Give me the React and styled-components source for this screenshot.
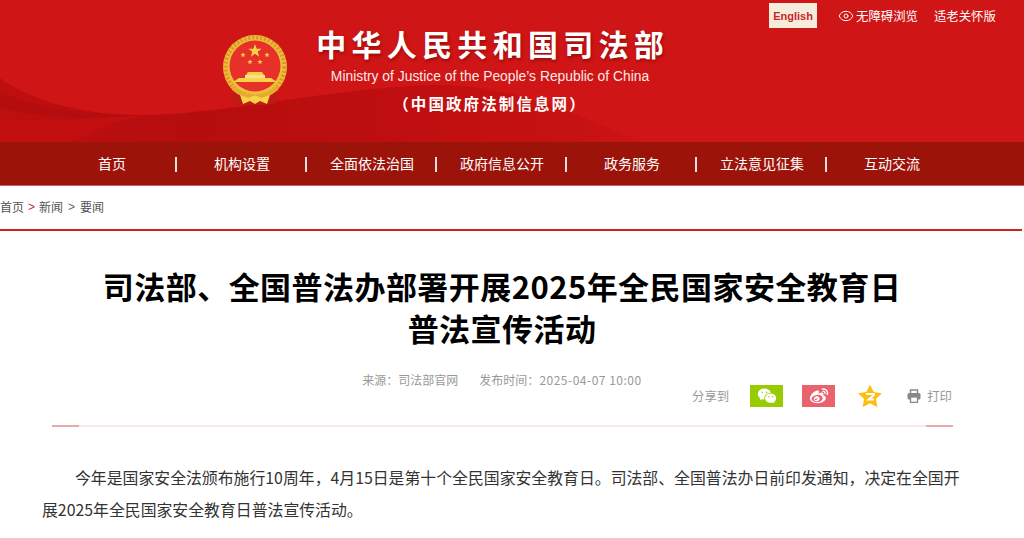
import React from "react";
import styled, { createGlobalStyle } from "styled-components";
import { Eye } from "lucide-react";
import { RiWechatFill, RiWeiboFill } from "react-icons/ri";

const CJK = `"Noto Sans CJK SC", "Liberation Sans", sans-serif`;

const GlobalStyle = createGlobalStyle`
  html, body {
    margin: 0;
    padding: 0;
    height: 100%;
    overflow: hidden;
    background: #fff;
    font-family: ${CJK};
  }
`;

const Header = styled.header`
  position: relative;
  height: 142px;
  background: #cf1515;
  overflow: hidden;
`;

const Waves = styled.svg`
  position: absolute;
  left: 0;
  top: 0;
`;

const Masthead = styled.div`
  position: relative;
  display: flex;
  align-items: flex-start;
  padding: 35px 0 0 222px;
`;

const Names = styled.div`
  display: flex;
  flex-direction: column;
  align-items: center;
  width: 346px;
  margin: -12px 0 0 29px;
  color: #fff;
`;

const SiteTitle = styled.div`
  font-size: 30px;
  font-weight: 700;
  line-height: 40px;
  letter-spacing: 5.3px;
  margin-right: -5.3px;
  white-space: nowrap;
  text-shadow: 1px 2px 3px rgba(90, 0, 0, 0.45);
`;

const SiteEnglish = styled.div`
  font-family: "Liberation Sans", sans-serif;
  font-size: 13.85px;
  line-height: 16px;
  margin-top: 5px;
  color: #fbe9e9;
  white-space: nowrap;
`;

const SiteNote = styled.div`
  font-size: 15.5px;
  font-weight: 700;
  line-height: 20px;
  letter-spacing: 2.1px;
  margin-top: 9px;
  white-space: nowrap;
`;

const TopLinks = styled.div`
  position: absolute;
  top: 3px;
  left: 769px;
  display: flex;
  align-items: center;
  height: 25px;
  color: #fff;
  font-size: 12.4px;
`;

const EnglishBadge = styled.a`
  display: flex;
  align-items: center;
  justify-content: center;
  width: 48px;
  height: 25px;
  background: #f6ecdc;
  color: #c9262a;
  font-family: "Liberation Sans", sans-serif;
  font-size: 11px;
  font-weight: 700;
`;

const TopLink = styled.a`
  display: flex;
  align-items: center;
  gap: 2px;
  margin-left: ${(p) => p.$gap}px;
  white-space: nowrap;
`;

const Nav = styled.nav`
  display: grid;
  grid-template-columns: repeat(7, 130px);
  height: 43px;
  padding-left: 47px;
  background: #9c130a;
  border-bottom: 1px solid #c4665f;
`;

const NavItem = styled.a`
  position: relative;
  display: flex;
  align-items: center;
  justify-content: center;
  padding-bottom: 2px;
  color: #fff;
  font-size: 14px;
  white-space: nowrap;

  &:not(:last-child)::after {
    content: "";
    position: absolute;
    right: 0;
    top: 15px;
    width: 2px;
    height: 15px;
    background: #f0dcdc;
  }
`;

const Crumbs = styled.div`
  display: flex;
  align-items: center;
  gap: 4px;
  height: 45px;
  padding-bottom: 2px;
  border-bottom: 2px solid #d0201f;
  color: #555;
  font-size: 12px;
  box-sizing: border-box;
  margin-right: 2px;
`;

const CrumbArrow = styled.span`
  margin: 0 ${(p) => (p.$red ? 0 : 1)}px;
  font-family: "Liberation Sans", sans-serif;
  color: ${(p) => (p.$red ? "#c0303a" : "#666")};
`;

const Article = styled.main`
  width: 900px;
  margin-left: 52px;
`;

const Headline = styled.h1`
  margin: 34px 0 0;
  font-size: 31px;
  font-weight: 700;
  line-height: 42px;
  letter-spacing: 0.45px;
  color: #000;
  text-align: center;
  white-space: nowrap;
`;

const Meta = styled.div`
  display: flex;
  justify-content: center;
  gap: 21px;
  height: 12px;
  margin-top: 24px;
  color: #999;
  font-size: 12px;
  line-height: 14px;
`;

const MetaDate = styled.span`
  letter-spacing: 0.5px;
`;

const ShareRow = styled.div`
  display: flex;
  justify-content: flex-end;
  align-items: center;
  height: 22px;
  color: #999;
  font-size: 12.4px;
`;

const ShareLabel = styled.span`
  margin-right: 21px;
`;

const ShareButton = styled.a`
  display: flex;
  align-items: center;
  justify-content: center;
  width: 33px;
  height: 22px;
  margin-right: ${(p) => p.$gap}px;
  background: ${(p) => p.$bg};
  color: #fff;
`;

const QzoneIcon = styled.svg`
  margin-right: 25px;
`;

const PrintLink = styled.a`
  display: flex;
  align-items: center;
  gap: 6px;
`;

const Rule = styled.div`
  position: relative;
  height: 2px;
  margin-top: 18px;
  background: #f5e9ea;

  &::before,
  &::after {
    content: "";
    position: absolute;
    top: 0;
    width: 27px;
    height: 2px;
    background: #e8a9a9;
  }
  &::before {
    left: 0;
  }
  &::after {
    right: -1px;
  }
`;

const Body = styled.p`
  width: 924px;
  margin: 35px 0 0 -10px;
  color: #333;
  font-size: 15.87px;
  line-height: 32px;
  text-indent: 33px;
`;

function star(cx, cy, r, inner = 0.4) {
  const pts = [];
  for (let i = 0; i < 10; i++) {
    const rad = i % 2 === 0 ? r : r * inner;
    const a = (Math.PI / 5) * i - Math.PI / 2;
    pts.push(`${(cx + rad * Math.cos(a)).toFixed(2)},${(cy + rad * Math.sin(a)).toFixed(2)}`);
  }
  return pts.join(" ");
}

function Emblem() {
  return (
    <svg width="66" height="72" viewBox="0 0 66 72">
      <path d="M11 52 L11 68 L22 70 H44 L55 68 L55 52 Z" fill="#bd1c16" />
      <circle cx="33" cy="32" r="32" fill="#efbd3c" />
      <circle cx="33" cy="32" r="29.5" fill="none" stroke="#d89a22" strokeWidth="4" strokeDasharray="2 2" />
      <circle cx="33" cy="31" r="25.5" fill="#e8302a" />
      <polygon points={star(33, 16, 7)} fill="#f7d348" />
      <polygon points={star(21, 20, 2.8)} fill="#f7d348" />
      <polygon points={star(45, 20, 2.8)} fill="#f7d348" />
      <polygon points={star(28, 27, 2.8)} fill="#f7d348" />
      <polygon points={star(38, 27, 2.8)} fill="#f7d348" />
      <path d="M26 37 H40 L42 40 H24 Z" fill="#f7d348" />
      <rect x="23" y="40" width="20" height="3" fill="#fbe08a" />
      <path d="M11 47 L17 43 H49 L55 47 Z" fill="#f7d348" />
      <path d="M10 50 Q33 70 56 50 L56 55 Q33 73 10 55 Z" fill="#e8a92c" />
      <path d="M18 60 L27 63 Q33 58 39 63 L48 60 L45 69 L38 66 L33 69 L28 66 L21 69 Z" fill="#f7d348" />
    </svg>
  );
}

function App() {
  return (
    <>
      <GlobalStyle />
      <Header>
        <Waves width="1024" height="142" viewBox="0 0 1024 142">
          <defs>
            <linearGradient id="swoosh" x1="0" y1="0" x2="1" y2="0">
              <stop offset="0" stopColor="#bf0e10" />
              <stop offset="0.3" stopColor="#b50d0e" />
              <stop offset="0.6" stopColor="#be0e0f" />
              <stop offset="1" stopColor="#ca1314" />
            </linearGradient>
          </defs>
          <path
            d="M0 78 C30 100 80 115 140 115 C220 115 330 88 433 85 C490 84 550 100 640 142 L0 142 Z"
            fill="url(#swoosh)"
          />
          <path d="M0 118 C30 122 90 120 150 114 C100 125 100 130 70 142 L0 142 Z" fill="#c40f10" />
          <path d="M0 92 C40 108 90 116 140 115 C90 120 40 118 0 108 Z" fill="#b50d0e" />
        </Waves>
        <Masthead>
          <Emblem />
          <Names>
            <SiteTitle>中华人民共和国司法部</SiteTitle>
            <SiteEnglish>Ministry of Justice of the People’s Republic of China</SiteEnglish>
            <SiteNote>&#xFF08;中国政府法制信息网&#xFF09;</SiteNote>
          </Names>
        </Masthead>
        <TopLinks>
          <EnglishBadge>English</EnglishBadge>
          <TopLink $gap={21}>
            <Eye size={16} strokeWidth={1.5} />
            无障碍浏览
          </TopLink>
          <TopLink $gap={16}>适老关怀版</TopLink>
        </TopLinks>
      </Header>
      <Nav>
        <NavItem>首页</NavItem>
        <NavItem>机构设置</NavItem>
        <NavItem>全面依法治国</NavItem>
        <NavItem>政府信息公开</NavItem>
        <NavItem>政务服务</NavItem>
        <NavItem>立法意见征集</NavItem>
        <NavItem>互动交流</NavItem>
      </Nav>
      <Crumbs>
        <span>首页</span>
        <CrumbArrow $red>&gt;</CrumbArrow>
        <span>新闻</span>
        <CrumbArrow>&gt;</CrumbArrow>
        <span>要闻</span>
      </Crumbs>
      <Article>
        <Headline>
          司法部、全国普法办部署开展2025年全民国家安全教育日
          <br />
          普法宣传活动
        </Headline>
        <Meta>
          <span>来源&#xFF1A;司法部官网</span>
          <span>
            发布时间&#xFF1A;<MetaDate>2025-04-07 10:00</MetaDate>
          </span>
        </Meta>
        <ShareRow>
          <ShareLabel>分享到</ShareLabel>
          <ShareButton $bg="#99cc00" $gap={19}>
            <RiWechatFill size={20} />
          </ShareButton>
          <ShareButton $bg="#e9636f" $gap={23}>
            <RiWeiboFill size={20} />
          </ShareButton>
          <QzoneIcon width="24" height="22" viewBox="0 0 24 22">
            <polygon points={star(12, 12, 12.5, 0.5)} fill="#fdbe10" />
            <path d="M8 9 H16 V10 L10.5 14.5 H16" fill="none" stroke="#fff" strokeWidth="1.8" />
          </QzoneIcon>
          <PrintLink>
            <svg width="14" height="14" viewBox="0 0 14 14">
              <path d="M3.5 4 V1 H10.5 V4" fill="none" stroke="#888" strokeWidth="1.4" />
              <rect x="0.5" y="4" width="13" height="6.5" rx="1.5" fill="#888" />
              <rect x="3.5" y="8" width="7" height="5.3" fill="#fff" stroke="#888" strokeWidth="1.3" />
            </svg>
            打印
          </PrintLink>
        </ShareRow>
        <Rule />
        <Body>
          今年是国家安全法颁布施行10周年&#xFF0C;4月15日是第十个全民国家安全教育日。司法部、全国普法办日前印发通知&#xFF0C;决定在全国开展2025年全民国家安全教育日普法宣传活动。
        </Body>
      </Article>
    </>
  );
}

export default App;
